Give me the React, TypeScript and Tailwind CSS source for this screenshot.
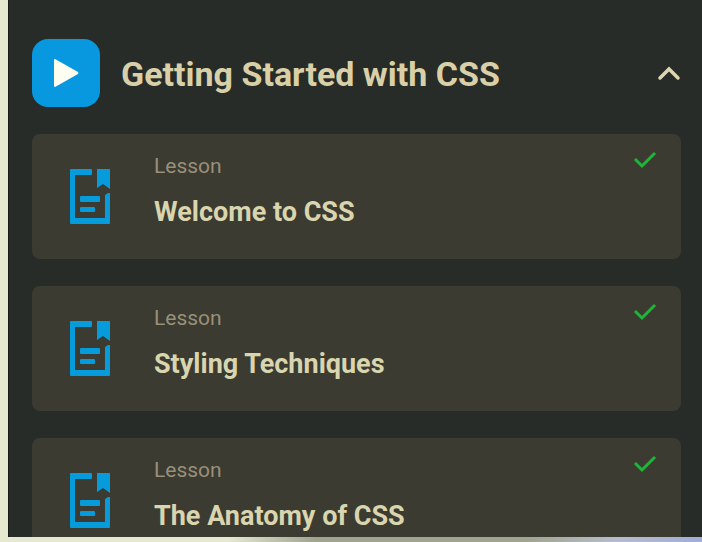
import { useState } from "react";

const lessons = ["Welcome to CSS", "Styling Techniques", "The Anatomy of CSS"];

function LessonIcon() {
  return (
    <svg viewBox="0 0 42 56" className="h-14 w-[42px] shrink-0 fill-[#069cdc]" aria-hidden="true">
      <path d="M2 0H22Q23 0 23 1V5Q23 6 22 6H6V49H36V26L39 24H41V54Q41 55 40 55H2Q1 55 1 54V1Q1 0 2 0Z" />
      <path d="M28 0H41V20L34 15L28 19Z" />
      <path d="M12 27H30Q31 27 31 28V32Q31 33 30 33H12Q11 33 11 32V28Q11 27 12 27ZM12 38H25Q26 38 26 39V42Q26 43 25 43H12Q11 43 11 42V39Q11 38 12 38Z" />
    </svg>
  );
}

function LessonCard({ title }: { title: string }) {
  return (
    <li>
      <a
        href="#lesson"
        className="flex h-[125px] items-start rounded-lg bg-[#3b3b32] pr-6 pl-[37px]"
      >
        <div className="pt-[35px]">
          <LessonIcon />
        </div>
        <div className="min-w-0 flex-1 pt-4 pl-[43px]">
          <p className="text-[21px] leading-8 text-[#989078]">Lesson</p>
          <h3 className="pt-3 text-[27px] leading-9 font-bold text-[#d9d5ae]">{title}</h3>
        </div>
        <svg
          viewBox="0 0 24 20"
          className="mt-4 h-5 w-6 shrink-0 fill-none stroke-[#1fb53a] stroke-3"
          role="img"
          aria-label="Completed"
        >
          <path d="M2 9L9 16L22 3" />
        </svg>
      </a>
    </li>
  );
}

export default function App() {
  const [open, setOpen] = useState(true);
  return (
    <div className="flex h-screen flex-col bg-[#e6e9d0] font-[Roboto,sans-serif]">
      <main className="ml-2 min-h-0 flex-1 overflow-hidden border-l border-[#161c1b] bg-[#272c28] pt-[39px] pr-[21px] pl-[23px]">
        <h2>
          <button
            type="button"
            aria-expanded={open}
            onClick={() => setOpen(!open)}
            className="flex w-full items-center text-left"
          >
            <span className="flex size-[68px] shrink-0 items-center justify-center rounded-2xl bg-[#0798e0]">
              <svg viewBox="0 0 26 28" className="h-7 w-[26px] fill-[#fdfdf0]" aria-hidden="true">
                <path d="M1 1Q1 0 2 0L25 13Q26 14 25 15L2 28Q1 28 1 27Z" />
              </svg>
            </span>
            <span className="flex-1 pt-0.5 pl-[21px] text-[34px] leading-10 font-bold text-[#d9d0a8]">
              Getting Started with CSS
            </span>
            <svg
              viewBox="0 0 24 16"
              className="h-4 w-6 shrink-0 fill-none stroke-[#ded6b3] stroke-[3.5]"
              strokeLinecap="round"
              aria-hidden="true"
            >
              <path d="M3 13L12 4L21 13" />
            </svg>
          </button>
        </h2>
        {open && (
          <ul className="flex flex-col gap-[27px] pt-[27px]">
            {lessons.map((title) => (
              <LessonCard key={title} title={title} />
            ))}
          </ul>
        )}
      </main>
      <div className="flex h-[5px] shrink-0">
        <div className="w-1/2 bg-linear-to-r from-[#e6e9d0] from-65% to-[#a0a48f] to-90%" />
        <div className="w-1/2 bg-linear-to-r from-[#a0a48f] from-50% via-[#b5bdcb] via-75% to-[#a0add8]" />
      </div>
    </div>
  );
}
